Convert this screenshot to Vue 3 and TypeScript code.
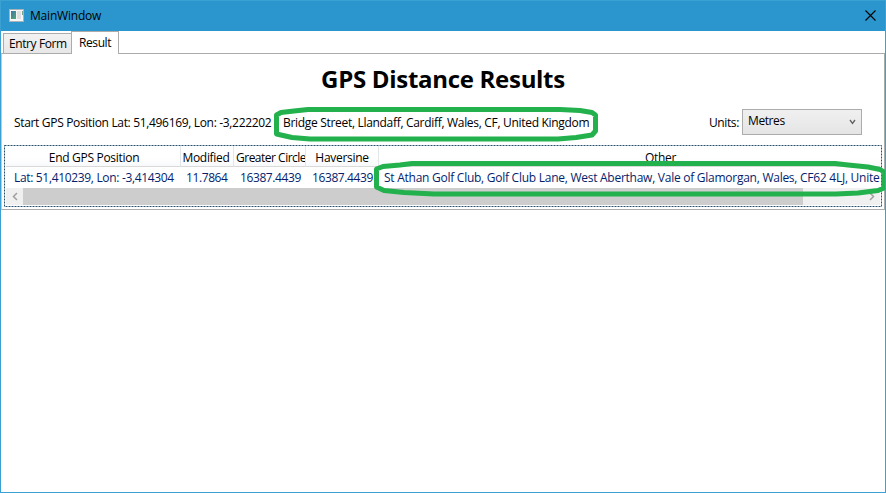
<script setup lang="ts">
import { ref } from 'vue'

interface Column {
  key: string
  title: string
  value: string
}

const tabs = ['Entry Form', 'Result']
const activeTab = ref('Result')
const units = ref('Metres')

const columns: Column[] = [
  { key: 'end', title: 'End GPS Position', value: 'Lat: 51,410239, Lon: -3,414304' },
  { key: 'modified', title: 'Modified', value: '11.7864' },
  { key: 'circle', title: 'Greater Circle', value: '16387.4439' },
  { key: 'haversine', title: 'Haversine', value: '16387.4439' },
  {
    key: 'other',
    title: 'Other',
    value: 'St Athan Golf Club, Golf Club Lane, West Aberthaw, Vale of Glamorgan, Wales, CF62 4LJ, Unite',
  },
]
</script>

<template>
  <div class="window">
    <header class="titlebar">
      <svg class="app-icon" width="15" height="13" viewBox="0 0 15 13">
        <defs>
          <linearGradient id="pane" x1="0" y1="0" x2="1" y2="1">
            <stop offset="0" stop-color="#3f74a8" />
            <stop offset="1" stop-color="#4faa72" />
          </linearGradient>
        </defs>
        <rect x=".5" y=".5" width="14" height="12" fill="#f6f6f6" stroke="#a9b2b6" />
        <rect x="2" y="2" width="5" height="8" fill="url(#pane)" />
        <rect x="8" y="2" width="4" height="8" fill="#dedede" />
        <rect x="13" y="2" width="1" height="4" fill="#78a390" />
      </svg>
      <span class="caption">MainWindow</span>
      <svg class="close" width="11" height="11" viewBox="0 0 11 11">
        <path d="M.5 .5 10.5 10.5M10.5 .5 .5 10.5" stroke="#000" stroke-width="1.1" fill="none" />
      </svg>
    </header>

    <nav class="tabs">
      <div
        v-for="tab in tabs"
        :key="tab"
        class="tab"
        :class="{ active: tab === activeTab }"
        @click="activeTab = tab"
      >{{ tab }}</div>
    </nav>

    <main class="panel">
      <h1><span>GPS Distance Results</span></h1>

      <div class="info">
        <span class="start">Start GPS Position Lat: 51,496169, Lon: -3,222202</span>
        <span class="address">Bridge Street, Llandaff, Cardiff, Wales, CF, United Kingdom</span>
        <span class="units-label">Units:</span>
        <div class="combo">
          <span class="combo-value">{{ units }}</span>
          <svg width="7" height="6" viewBox="0 0 7 6">
            <path d="M1 1 3.5 4.3 6 1" stroke="#606060" stroke-width="1.3" fill="none" />
          </svg>
        </div>
      </div>

      <section class="list">
        <svg class="focus" width="878" height="62">
          <rect x=".5" y=".5" width="877" height="61" />
        </svg>
        <div class="grid header">
          <div v-for="c in columns" :key="c.key" class="cell" :class="c.key"><span>{{ c.title }}</span></div>
        </div>
        <div class="grid row">
          <div v-for="c in columns" :key="c.key" class="cell" :class="c.key"><span>{{ c.value }}</span></div>
        </div>
        <div class="scrollbar">
          <div class="arrow">
            <svg width="6" height="9" viewBox="0 0 6 9"><path d="M5 1 1.5 4.5 5 8" /></svg>
          </div>
          <div class="track"><div class="thumb"></div></div>
          <div class="arrow">
            <svg width="6" height="9" viewBox="0 0 6 9"><path d="M1 1 4.5 4.5 1 8" /></svg>
          </div>
        </div>
      </section>
    </main>

    <svg class="marks" width="886" height="493" viewBox="0 0 886 493">
      <path d="M276.500 115 281 112.500 294 111 308 109.500H560L580 110.500 592 112.500 595.500 115V131L592 135 576 137.500 558 139H310L292 137.500 276.500 134Z" />
      <path d="M376.500 169 383 166.500 400 165 412 163.500H835L848 165 868 167 880 169.500 884 172V188L878 190.500 858 193 836 194H434L404 192.500 384 190.500 376.500 187Z" />
    </svg>
  </div>
</template>

<style>
body {
  margin: 0;
  background: #fff;
}
</style>

<style scoped>
.window {
  position: relative;
  box-sizing: border-box;
  width: 886px;
  height: 493px;
  overflow: hidden;
  background: #fff;
  border: 1px solid #3ba1d3;
  font-family: "Open Sans", "Noto Sans", sans-serif;
  font-size: 12px;
  line-height: 16px;
  color: #000;
  white-space: nowrap;
}

.titlebar {
  display: flex;
  align-items: center;
  height: 30px;
  padding: 0 9px 0 8px;
  background: #2b96cd;
}

.app-icon {
  margin-top: -1px;
}

.caption {
  margin-left: 6px;
  letter-spacing: -0.2px;
}

.close {
  margin: -2px 0 0 auto;
}

.tabs {
  display: flex;
  align-items: flex-end;
  height: 22px;
  padding-left: 2px;
}

.tab {
  box-sizing: border-box;
  width: 69px;
  height: 20px;
  padding-left: 5px;
  line-height: 19px;
  letter-spacing: -0.4px;
  background: linear-gradient(#f2f2f2, #e7e7e7);
  border: 1px solid #acacac;
  border-bottom: 0;
}

.tab.active {
  position: relative;
  width: 48px;
  height: 23px;
  margin: 0 0 -1px -1px;
  padding-left: 7px;
  line-height: 21px;
  background: #fff;
}

.panel {
  box-sizing: border-box;
  height: 157px;
  padding: 0 2px;
  border: 1px solid #acacac;
  border-left-color: #c8c8c8;
}

h1 {
  margin: 0;
  padding-top: 9px;
  height: 46px;
  font-size: 24px;
  line-height: 32px;
  font-weight: 700;
  text-align: center;
  letter-spacing: -0.3px;
}

.info {
  display: flex;
  height: 36px;
  padding-left: 10px;
}

.start,
.address,
.units-label {
  margin-top: 6px;
}

.start {
  width: 269px;
  letter-spacing: -0.33px;
}

.address {
  width: 426px;
  letter-spacing: -0.31px;
}

.units-label {
  width: 33px;
  letter-spacing: -0.4px;
}

.combo {
  display: flex;
  align-items: center;
  box-sizing: border-box;
  width: 120px;
  height: 26px;
  padding: 0 5px;
  background: linear-gradient(#f0f0f0, #e5e5e5);
  border: 1px solid #acacac;
}

.combo-value {
  flex: 1;
  margin-top: -2px;
  letter-spacing: -0.4px;
}

.list {
  position: relative;
  box-sizing: border-box;
  width: 878px;
  height: 62px;
  padding: 1px 2px;
}

.focus {
  position: absolute;
  inset: 0;
}

.focus rect {
  fill: none;
  stroke: #24506e;
  stroke-dasharray: 2 1;
}

.grid {
  display: grid;
  grid-template-columns: 175px 53px 72px 73px 501px;
}

.header {
  height: 21px;
  background: linear-gradient(#fff 60%, #f7f8fa);
}

.header .cell {
  box-sizing: border-box;
  display: flex;
  justify-content: center;
  overflow: hidden;
  line-height: 23px;
  border-right: 1px solid #e3e6e9;
  border-bottom: 1px solid #d9d9d9;
  letter-spacing: -0.3px;
}

.header .end {
  padding-left: 2px;
}

.header .modified {
  padding-right: 2px;
}

.header .circle {
  justify-content: flex-start;
  padding-left: 2px;
  letter-spacing: -0.5px;
}

.header .other {
  padding-left: 62px;
  border-right: 0;
}

.row {
  height: 21px;
  color: #041e6c;
}

.row .cell {
  overflow: hidden;
  line-height: 21px;
  padding-left: 6px;
  letter-spacing: -0.4px;
}

.row .end {
  padding-left: 8px;
  letter-spacing: -0.33px;
}

.row .modified {
  padding-left: 5px;
}

.row .other {
  padding-left: 5px;
  letter-spacing: -0.26px;
}

.scrollbar {
  display: flex;
  height: 17px;
  background: #f0f0f0;
}

.arrow {
  display: flex;
  align-items: center;
  justify-content: center;
  width: 17px;
}

.arrow path {
  fill: none;
  stroke: #a0a0a0;
  stroke-width: 1.5;
}

.track {
  flex: 1;
}

.thumb {
  width: 780px;
  height: 17px;
  background: #cdcdcd;
}

.marks {
  position: absolute;
  left: -1px;
  top: -1px;
  pointer-events: none;
}

.marks path {
  fill: none;
  stroke: #22b14c;
  stroke-width: 5;
  stroke-linejoin: round;
}
</style>
